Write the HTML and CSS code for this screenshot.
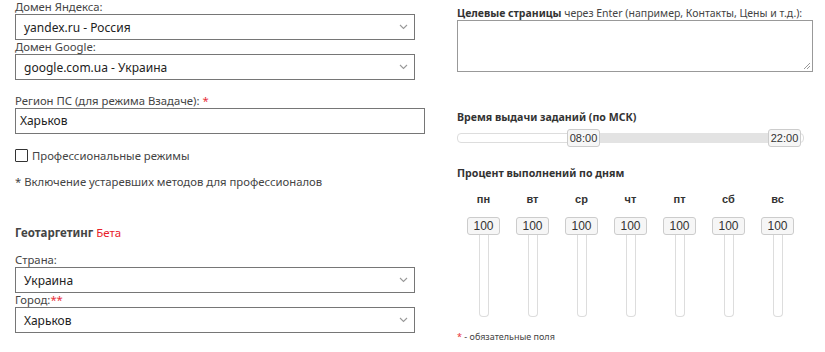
FILE: index.html
```html
<!DOCTYPE html>
<html lang="ru">
<head>
<meta charset="utf-8">
<link rel="stylesheet" href="styles.css">
</head>
<body>
<div class="page">
  <div class="col left">
    <div class="lbl">Домен Яндекса:</div>
    <div class="sel"><span>yandex.ru - Россия</span><svg class="chev" width="9" height="6" viewBox="0 0 9 6"><polyline points="1,1 4.5,4.5 8,1" fill="none" stroke="#999" stroke-width="1.1"/></svg></div>
    <div class="lbl">Домен Google:</div>
    <div class="sel"><span>google.com.ua - Украина</span><svg class="chev" width="9" height="6" viewBox="0 0 9 6"><polyline points="1,1 4.5,4.5 8,1" fill="none" stroke="#999" stroke-width="1.1"/></svg></div>

    <div class="lbl region">Регион ПС (для режима Взадаче): <span class="req">*</span></div>
    <div class="inp">Харьков</div>

    <label class="check"><span class="box"></span>Профессиональные режимы</label>
    <div class="note">* Включение устаревших методов для профессионалов</div>

    <div class="head">Геотаргетинг <span class="beta">Бета</span></div>

    <div class="lbl country">Страна:</div>
    <div class="sel"><span>Украина</span><svg class="chev" width="9" height="6" viewBox="0 0 9 6"><polyline points="1,1 4.5,4.5 8,1" fill="none" stroke="#999" stroke-width="1.1"/></svg></div>
    <div class="lbl">Город:<span class="req">**</span></div>
    <div class="sel"><span>Харьков</span><svg class="chev" width="9" height="6" viewBox="0 0 9 6"><polyline points="1,1 4.5,4.5 8,1" fill="none" stroke="#999" stroke-width="1.1"/></svg></div>
  </div>

  <div class="col right">
    <div class="rtitle"><b>Целевые страницы</b> через Enter (например, Контакты, Цены и т.д.):</div>
    <div class="textarea"><svg class="grip" width="8" height="8" viewBox="0 0 8 8"><line x1="7" y1="1" x2="1" y2="7" stroke="#999"/><line x1="7" y1="4" x2="4" y2="7" stroke="#999"/></svg></div>

    <div class="rhead time">Время выдачи заданий (по МСК)</div>
    <div class="range">
      <div class="track"></div>
      <div class="fill" style="left:126px;width:186px"></div>
      <div class="handle" style="left:110px">08:00</div>
      <div class="handle" style="left:311px">22:00</div>
    </div>

    <div class="rhead pct">Процент выполнений по дням</div>
    <div class="days">
      <div class="day"><div class="dname">пн</div><div class="val">100</div><div class="vtrack"></div></div>
      <div class="day"><div class="dname">вт</div><div class="val">100</div><div class="vtrack"></div></div>
      <div class="day"><div class="dname">ср</div><div class="val">100</div><div class="vtrack"></div></div>
      <div class="day"><div class="dname">чт</div><div class="val">100</div><div class="vtrack"></div></div>
      <div class="day"><div class="dname">пт</div><div class="val">100</div><div class="vtrack"></div></div>
      <div class="day"><div class="dname">сб</div><div class="val">100</div><div class="vtrack"></div></div>
      <div class="day"><div class="dname">вс</div><div class="val">100</div><div class="vtrack"></div></div>
    </div>
    <div class="foot"><span class="req">*</span> - обязательные поля</div>
  </div>
</div>
</body>
</html>
```
FILE: styles.css
```css
* { box-sizing: border-box; }
html, body { margin: 0; padding: 0; background: #fff; }
body {
  font-family: "Noto Sans", "DejaVu Sans", sans-serif;
  font-size: 11.3px;
  color: #444;
}
.page {
  display: flex;
  padding-left: 15px;
  gap: 32px;
}
.col.left { width: 410px; display: flex; flex-direction: column; }
.col.right { width: 356px; display: flex; flex-direction: column; }

.lbl { height: 14px; line-height: 14px; white-space: nowrap; }
.lbl.region { margin-top: 14px; }
.lbl.country { margin-top: 13px; }
.req { color: #e8303a; }

.sel {
  width: 400px;
  height: 26px;
  border: 1px solid #767676;
  display: flex;
  align-items: center;
  justify-content: space-between;
  padding: 0 6px 0 8px;
  font-size: 12px;
  color: #222;
}
.chev { display: block; }

.inp {
  width: 410px;
  height: 26px;
  border: 1px solid #767676;
  padding-left: 4px;
  font-size: 12px;
  color: #222;
  line-height: 24px;
}

.check {
  margin-top: 14px;
  height: 15px;
  display: flex;
  align-items: center;
  gap: 4px;
}
.box {
  width: 13px;
  height: 13px;
  border: 1px solid #333;
  border-radius: 1px;
  background: #fff;
}
.note { margin-top: 12px; line-height: 14px; }

.head {
  margin-top: 37px;
  line-height: 14px;
  font-weight: bold;
  font-size: 11.5px;
}
.beta { font-weight: normal; color: #e8202a; }

.rtitle { margin-top: 6px; line-height: 14px; font-size: 10.5px; white-space: nowrap; }
.rtitle b { color: #333; }
.textarea {
  width: 356px;
  height: 52px;
  border: 1px solid #999;
  position: relative;
}
.grip { position: absolute; right: 1px; bottom: 1px; }

.rhead { line-height: 14px; font-weight: bold; font-size: 10.6px; color: #333; }
.rhead.time { margin-top: 38px; }
.rhead.pct { margin-top: 19px; }

.range { position: relative; height: 18px; margin-top: 5px; width: 347px; }
.track {
  position: absolute; left: 0; right: 0; top: 4px; height: 10px;
  border: 1px solid #ddd; border-radius: 4px; background: #fff;
}
.fill { position: absolute; top: 4px; height: 10px; background: #e3e3e3; }
.handle {
  position: absolute; top: 0; width: 33px; height: 18px;
  border: 1px solid #ccc; border-radius: 3px; background: #f6f6f6;
  font-family: "Liberation Sans", Arial, sans-serif; font-size: 11px; color: #333;
  text-align: center; line-height: 16px;
}

.days {
  margin-top: 12px;
  padding-left: 2px;
  display: grid;
  grid-template-columns: repeat(7, 49px);
}
.day { display: flex; flex-direction: column; align-items: center; }
.dname {
  line-height: 14px; font-weight: bold; font-size: 11px; color: #333;
  font-family: "Liberation Sans", Arial, sans-serif;
}
.val {
  margin-top: 11px;
  width: 33px; height: 18px;
  border: 1px solid #ccc; border-radius: 3px; background: #f6f6f6;
  font-family: "Liberation Sans", Arial, sans-serif; font-size: 12px; color: #333;
  text-align: center; line-height: 16px;
}
.vtrack {
  width: 10px; height: 82px;
  border: 1px solid #ddd; border-top: none; border-radius: 0 0 4px 4px;
}
.foot { margin-top: 14px; font-size: 9px; line-height: 12px; color: #444; }
.foot .req { font-size: 9px; vertical-align: top; }
```
